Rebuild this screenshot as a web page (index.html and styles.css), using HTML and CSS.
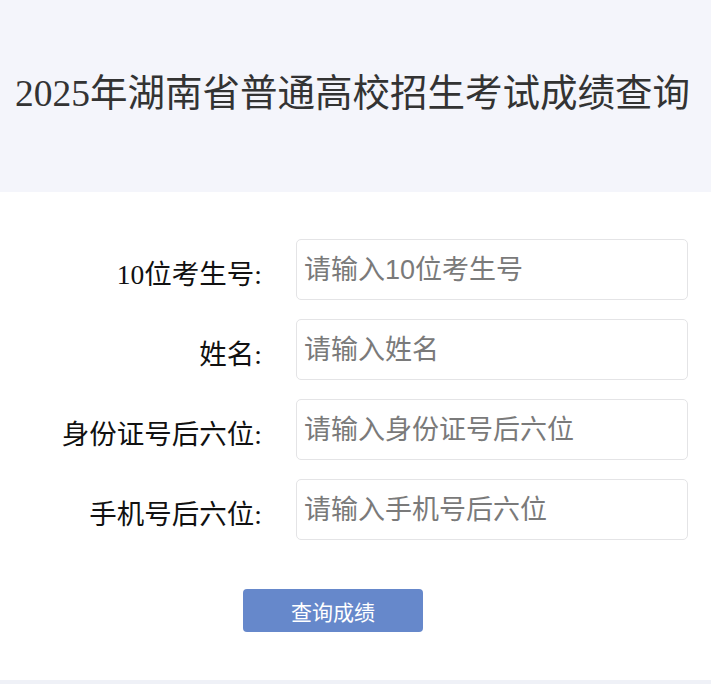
FILE: index.html
```html
<!DOCTYPE html>
<html lang="zh-CN">
<head>
<meta charset="utf-8">
<title>2025年湖南省普通高校招生考试成绩查询</title>
<link rel="stylesheet" href="styles.css">
</head>
<body>
<header class="banner">
  <h1 class="title">2025年湖南省普通高校招生考试成绩查询</h1>
</header>
<main class="content">
  <form class="form">
    <label class="label" for="ksh">10位考生号:</label>
    <input class="field" id="ksh" type="text" placeholder="请输入10位考生号">
    <label class="label" for="xm">姓名:</label>
    <input class="field" id="xm" type="text" placeholder="请输入姓名">
    <label class="label" for="sfz">身份证号后六位:</label>
    <input class="field" id="sfz" type="text" placeholder="请输入身份证号后六位">
    <label class="label" for="sj">手机号后六位:</label>
    <input class="field" id="sj" type="text" placeholder="请输入手机号后六位">
  </form>
  <div class="actions">
    <button class="submit" type="button">查询成绩</button>
  </div>
</main>
<footer class="foot"></footer>
</body>
</html>
```
FILE: styles.css
```css
html, body {
  margin: 0;
  padding: 0;
  background: #ffffff;
}
body {
  width: 711px;
  height: 684px;
  overflow: hidden;
  display: flex;
  flex-direction: column;
}
.banner {
  height: 192px;
  background: #f4f5fb;
  display: flex;
  align-items: center;
  justify-content: center;
}
.title {
  margin: 0 6px 4px 0;
  font-family: "Liberation Serif", "Noto Sans CJK SC", serif;
  font-weight: normal;
  font-size: 37.5px;
  line-height: 44px;
  color: #333333;
  white-space: nowrap;
}
.content {
  flex: 1;
  padding-top: 47px;
}
.form {
  display: grid;
  grid-template-columns: 262px 392px;
  column-gap: 34px;
  row-gap: 19px;
  margin: 0;
}
.label {
  display: flex;
  align-items: center;
  justify-content: flex-end;
  padding-top: 4px;
  font-family: "Liberation Serif", "Noto Sans CJK SC", serif;
  font-size: 27.5px;
  color: #111111;
  white-space: nowrap;
}
.field {
  box-sizing: border-box;
  height: 61px;
  width: 392px;
  margin: 0;
  padding: 2px 7px 0;
  border: 1px solid #e4e4e6;
  border-radius: 5px;
  background: #ffffff;
  font-family: "Liberation Sans", "Noto Sans CJK SC", sans-serif;
  font-size: 27px;
  color: #333333;
  outline: none;
}
.field::placeholder {
  color: #7a7a7a;
}
.actions {
  display: flex;
  padding-top: 49px;
  padding-left: 243px;
}
.submit {
  width: 180px;
  height: 43px;
  border: none;
  border-radius: 4px;
  background: #6688cb;
  color: #ffffff;
  font-family: "Noto Sans CJK SC", sans-serif;
  font-size: 21px;
  padding: 0;
  cursor: pointer;
}
.foot {
  height: 4px;
  background: #eff1f7;
}
```
